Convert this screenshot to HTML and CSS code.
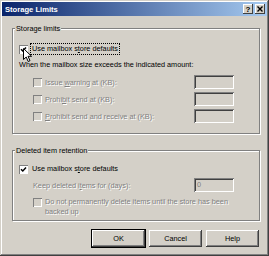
FILE: index.html
```html
<!DOCTYPE html>
<html>
<head>
  <meta charset="UTF-8" />
  <title>Storage Limits</title>
  <link rel="stylesheet" href="styles.css">
</head>
<body>
  <div class="window">
    <div class="titlebar">
      <span class="title">Storage Limits</span>
      <div class="caption-btns">
        <span class="cap-btn">?</span>
        <span class="cap-btn">
          <svg width="6" height="6" viewBox="0 0 6 6"><path d="M0.5 0.5L5.5 5.5M5.5 0.5L0.5 5.5" stroke="#000" stroke-width="1.4"/></svg>
        </span>
      </div>
    </div>

    <div class="content">
      <!-- Storage limits group -->
      <fieldset class="group limits">
        <legend>Storage limits</legend>
        <div class="group-body">
          <div class="check-row">
            <span class="box checked">
              <svg width="7" height="7" viewBox="0 0 7 7"><path d="M1 3.2L2.8 5L6 1.6" fill="none" stroke="#000" stroke-width="1.5"/></svg>
            </span>
            <span class="focus">Use mailbox s<u>t</u>ore defaults</span>
          </div>
          <div class="note">When the mailbox size exceeds the indicated amount:</div>
          <div class="limit-row disabled">
            <span class="box"></span>
            <span class="label">Issue <u>w</u>arning at (KB):</span>
            <span class="field"></span>
          </div>
          <div class="limit-row disabled">
            <span class="box"></span>
            <span class="label">Prohi<u>b</u>it send at (KB):</span>
            <span class="field"></span>
          </div>
          <div class="limit-row disabled">
            <span class="box"></span>
            <span class="label"><u>P</u>rohibit send and receive at (KB):</span>
            <span class="field"></span>
          </div>
        </div>
      </fieldset>

      <!-- Deleted item retention group -->
      <fieldset class="group retention">
        <legend>Deleted item retention</legend>
        <div class="group-body">
          <div class="check-row">
            <span class="box checked">
              <svg width="7" height="7" viewBox="0 0 7 7"><path d="M1 3.2L2.8 5L6 1.6" fill="none" stroke="#000" stroke-width="1.5"/></svg>
            </span>
            <span class="plain">Use mailbox s<u>t</u>ore defaults</span>
          </div>
          <div class="limit-row disabled no-box">
            <span class="label">Keep deleted i<u>t</u>ems for (days):</span>
            <span class="field">0</span>
          </div>
          <div class="wrap-row disabled">
            <span class="box"></span>
            <span class="label">Do not permanently delete items until the store has been backed up</span>
          </div>
        </div>
      </fieldset>

      <div class="actions">
        <button class="btn default">OK</button>
        <button class="btn">Cancel</button>
        <button class="btn">Help</button>
      </div>
    </div>

    <svg class="cursor" width="10" height="15" viewBox="0 0 10 15">
      <path d="M0.5 0.5L0.5 11.5L3.2 9L5.2 13.5L7 12.7L5 8.3L8.6 8.3Z" fill="#fff" stroke="#000" stroke-width="1"/>
    </svg>
  </div>
</body>
</html>
```

FILE: styles.css
```css
body {
  margin: 0;
  background: #d4d0c8;
  font-family: "Liberation Sans", Arial, sans-serif;
  font-size: 7.3px;
  color: #000;
}

u {
  text-decoration-thickness: 1px;
  text-underline-offset: 1px;
}

.window {
  position: relative;
  width: 269px;
  height: 256px;
  box-sizing: border-box;
  padding: 2px;
  background: #d4d0c8;
  box-shadow: inset -1px -1px #404040, inset 1px 1px #d4d0c8,
              inset -2px -2px #808080, inset 2px 2px #fff;
}

.titlebar {
  height: 14px;
  display: flex;
  align-items: center;
  justify-content: space-between;
  padding: 0 2px 0 2px;
  background: linear-gradient(to right, #0a246a, #a6caf0);
  color: #fff;
}

.title {
  font-weight: bold;
  font-size: 7.6px;
  padding-left: 1px;
}

.caption-btns {
  display: flex;
  gap: 2px;
}

.cap-btn {
  width: 10px;
  height: 10px;
  box-sizing: border-box;
  display: flex;
  align-items: center;
  justify-content: center;
  background: #d4d0c8;
  color: #000;
  font-weight: bold;
  font-size: 8px;
  box-shadow: inset -1px -1px #404040, inset 1px 1px #fff;
}

.content {
  padding: 7px 7px 0 10px;
}

.group {
  margin: 0;
  padding: 0;
  min-width: 0;
  width: 248px;
  box-sizing: border-box;
  border: 1px solid #808080;
  box-shadow: 1px 1px 0 #fff, inset 1px 1px 0 #fff;
}

.group legend {
  margin-left: 2px;
  padding: 0 1px;
  line-height: 11px;
  background: #d4d0c8;
}

.group-body {
  padding: 9px 25px 10px 6px;
}

.retention {
  margin-top: 11px;
}

.retention .group-body {
  padding-top: 7px;
  padding-bottom: 3px;
}

.check-row {
  display: flex;
  align-items: center;
  height: 12px;
}

.box {
  width: 9px;
  height: 9px;
  flex: none;
  box-sizing: border-box;
  display: flex;
  align-items: center;
  justify-content: center;
  background: #fff;
  box-shadow: inset 1px 1px #808080, inset -1px -1px #fff;
}

.disabled .box {
  background: #d4d0c8;
}

.check-row .focus {
  margin-left: 3px;
  padding: 0 1px;
  line-height: 10px;
  outline: 1px dotted #000;
}

.check-row .plain {
  margin-left: 4px;
  line-height: 10px;
}

.note {
  margin-top: 4px;
  line-height: 11px;
}

.limit-row {
  display: flex;
  align-items: center;
  height: 14px;
  margin: 3px 0 0 14px;
}

.note + .limit-row {
  margin-top: 5px;
}

.retention .limit-row {
  margin-top: 3px;
}

.limit-row .label {
  flex: 1;
  margin-left: 3px;
}

.limit-row.no-box .label {
  margin-left: 0;
}

.disabled .label {
  color: #808080;
  text-shadow: 1px 1px 0 #fff;
}

.field {
  width: 40px;
  height: 14px;
  flex: none;
  box-sizing: border-box;
  padding: 0 3px;
  line-height: 14px;
  color: #808080;
  background: #d4d0c8;
  box-shadow: inset 1px 1px #808080, inset -1px -1px #fff,
              inset 2px 2px #404040, inset -2px -2px #d4d0c8;
}

.wrap-row {
  display: flex;
  align-items: flex-start;
  margin: 5px 0 0 14px;
}

.wrap-row .box {
  margin-top: 1px;
}

.wrap-row .label {
  width: 196px;
  margin-left: 3px;
  line-height: 10px;
}

.actions {
  display: flex;
  justify-content: flex-end;
  gap: 4px;
  margin-top: 9px;
  padding-right: 1px;
}

.btn {
  width: 53px;
  height: 17px;
  padding: 0;
  border: none;
  background: #d4d0c8;
  font-family: inherit;
  font-size: 7.3px;
  color: #000;
  box-shadow: inset -1px -1px #404040, inset 1px 1px #fff,
              inset -2px -2px #808080, inset 2px 2px #d4d0c8;
}

.btn.default {
  outline: 1px solid #000;
  outline-offset: 0;
  box-shadow: inset -1px -1px #404040, inset 1px 1px #fff,
              inset -2px -2px #808080;
}

.cursor {
  position: absolute;
  left: 23px;
  top: 48px;
}
```
